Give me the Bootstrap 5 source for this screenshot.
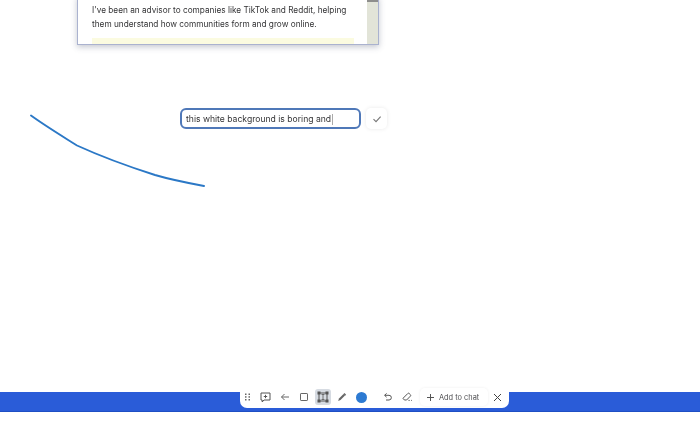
<!DOCTYPE html>
<html lang="en">
<head>
<meta charset="utf-8">
<title>Canvas</title>
<link href="https://cdn.jsdelivr.net/npm/bootstrap@5.3.0/dist/css/bootstrap.min.css" rel="stylesheet">
<style>
html,body{width:700px;height:428px;overflow:hidden;background:#fff;font-family:"Inter","Liberation Sans",sans-serif;color:#3a3a3c}
.stage{height:392px;position:relative}
.bluebar{height:20px;background:#2a5cd8;border-bottom:1px solid #1f4fc4;filter:blur(.4px)}
.doc{position:absolute;left:77px;top:-4px;width:302px;height:49px;background:#fff;border:1px solid #aab2cf;border-top:0;box-shadow:0 2px 6px rgba(60,70,100,.3);overflow:hidden}
.doc-text{position:absolute;left:14px;top:7px;margin:0;font-size:8.25px;line-height:14px;color:#333335;white-space:nowrap;filter:blur(.3px)}
.hl{position:absolute;left:14px;top:42px;width:262px;height:7px;background:#fbfbe0}
.track{position:absolute;right:0;top:0;width:11px;height:100%;background:#e2e4d8}
.thumb{position:absolute;left:0;top:0;width:100%;height:6px;background:#8e8e8c}
.scribble{position:absolute;left:0;top:0;filter:blur(.3px)}
.inp{position:absolute;left:180px;top:108px;width:181px;height:21px;border:2px solid #4f78b8;border-radius:6px;font-size:8.6px;color:#333335;padding:1px 0 0 4px;background:#fff;white-space:nowrap}
.inp span:first-child{filter:blur(.3px)}
.caret{display:inline-block;width:1px;height:11px;background:#aaa;margin-left:1px;vertical-align:-2px}
.okbtn{position:absolute;left:366px;top:108px;width:21px;height:21px;border-radius:5px;background:#fff;box-shadow:0 0 4px rgba(0,0,0,.09)}
.tools{position:absolute;left:240px;top:386px;width:269px;height:22px;background:#fff;border-radius:0 0 7px 7px;filter:blur(.3px)}
.ti{width:19px;height:16px;flex:none;border-radius:3px}
.ti-first{width:16px}
.ti.on{background:#d6dbe2;width:16px;margin:0 1.5px}
.ti svg{display:block}
.dotc{width:11px;height:11px;border-radius:50%;background:#2d7ad2;flex:none;margin-left:5px}
.undo{margin-left:11.5px}
.addchat{width:68px;height:18px;padding-left:6px;border-radius:5px;font-size:7.4px;color:#4f4f52;box-shadow:0 0 3px rgba(0,0,0,.07);white-space:nowrap;margin-left:3px}
.addchat svg{margin-right:4.5px}
.addchat span{padding-top:1px}
</style>
</head>
<body>
<div class="stage">
  <div class="doc">
    <p class="doc-text">I've been an advisor to companies like TikTok and Reddit, helping<br>them understand how communities form and grow online.</p>
    <div class="hl"></div>
    <div class="track"><div class="thumb"></div></div>
  </div>
  <svg class="scribble" width="700" height="392" viewBox="0 0 700 392"><path d="M31 115.5C44 125 62 136 77 145.5C100 156 130 167 155 175C172 180 188 183 204 186" fill="none" stroke="#2b78c6" stroke-width="1.9" stroke-linecap="round"/></svg>
  <div class="inp d-flex align-items-center"><span>this white background is boring and</span><span class="caret"></span></div>
  <div class="okbtn d-flex align-items-center justify-content-center">
    <svg width="10" height="10" viewBox="0 0 10 10"><path d="M1.5 5.200 4 7.600 8.600 2.600" fill="none" stroke="#777" stroke-width="1.1"/></svg>
  </div>
</div>
<div class="bluebar"></div>
<div class="tools d-flex align-items-center">
  <div class="ti ti-first d-flex align-items-center justify-content-center"><svg width="8" height="8" viewBox="0 0 8 8" fill="#666"><rect x="1" y="0.5" width="1.5" height="1.5"/><rect x="4.5" y="0.5" width="1.5" height="1.5"/><rect x="1" y="3.200" width="1.5" height="1.5"/><rect x="4.5" y="3.200" width="1.5" height="1.5"/><rect x="1" y="6" width="1.5" height="1.5"/><rect x="4.5" y="6" width="1.5" height="1.5"/></svg></div>
  <div class="ti d-flex align-items-center justify-content-center"><svg width="11" height="11" viewBox="0 0 11 11" fill="none" stroke="#555" stroke-width="1"><path d="M1 1h9v7H4L2.200 10V8H1z"/><path d="M5.500 2.800v3.400M3.800 4.500h3.400"/></svg></div>
  <div class="ti d-flex align-items-center justify-content-center"><svg width="10" height="10" viewBox="0 0 10 10" fill="none" stroke="#666" stroke-width="1"><path d="M9 5H1.500M4.500 2 1.500 5l3 3"/></svg></div>
  <div class="ti d-flex align-items-center justify-content-center"><svg width="10" height="10" viewBox="0 0 10 10" fill="none" stroke="#666" stroke-width="1"><rect x="1.500" y="1.500" width="7" height="7" rx=".6"/></svg></div>
  <div class="ti on d-flex align-items-center justify-content-center"><svg width="12" height="12" viewBox="0 0 12 12" fill="none" stroke="#555" stroke-width="1"><path d="M3 2h6M3 10h6M2 3v6M10 3v6"/><rect x="1" y="1" width="2" height="2" fill="#555"/><rect x="9" y="1" width="2" height="2" fill="#555"/><rect x="1" y="9" width="2" height="2" fill="#555"/><rect x="9" y="9" width="2" height="2" fill="#555"/><path d="M4.500 3.500h3M6 3.500v5M4.500 8.500h3" stroke-width=".8"/></svg></div>
  <div class="ti d-flex align-items-center justify-content-center"><svg width="10" height="10" viewBox="0 0 10 10"><path d="M1.200 9 2 6.600 6.500 2.100 8 3.600 3.500 8.100z" fill="#666"/><path d="M7 1.500 8.600 3.200" stroke="#666" stroke-width="1.4"/></svg></div>
  <div class="dotc"></div>
  <div class="ti undo d-flex align-items-center justify-content-center"><svg width="10" height="10" viewBox="0 0 10 10" fill="none" stroke="#555" stroke-width="1"><path d="M3.600 1.400 1.600 3.300l2 1.900M1.800 3.300H6a2.300 2.300 0 0 1 0 4.700H3"/></svg></div>
  <div class="ti d-flex align-items-center justify-content-center"><svg width="11" height="10" viewBox="0 0 11 10" fill="none" stroke="#555" stroke-width="1"><path d="M1 6.300 5.800 1.500a1 1 0 0 1 1.400 0l1.200 1.200a1 1 0 0 1 0 1.400L4.600 8H2.400zM6.500 8.400h1.200M9 8.400h.8"/></svg></div>
  <div class="addchat d-flex align-items-center"><svg width="9" height="9" viewBox="0 0 9 9" fill="none" stroke="#555" stroke-width="1"><path d="M4.500 1v7M1 4.500h7"/></svg><span>Add to chat</span></div>
  <div class="ti d-flex align-items-center justify-content-center"><svg width="9" height="9" viewBox="0 0 9 9" fill="none" stroke="#444" stroke-width="1"><path d="M1 1l7 7M8 1 1 8"/></svg></div>
</div>
<script src="https://cdn.jsdelivr.net/npm/bootstrap@5.3.0/dist/js/bootstrap.bundle.min.js"></script>
</body>
</html>
